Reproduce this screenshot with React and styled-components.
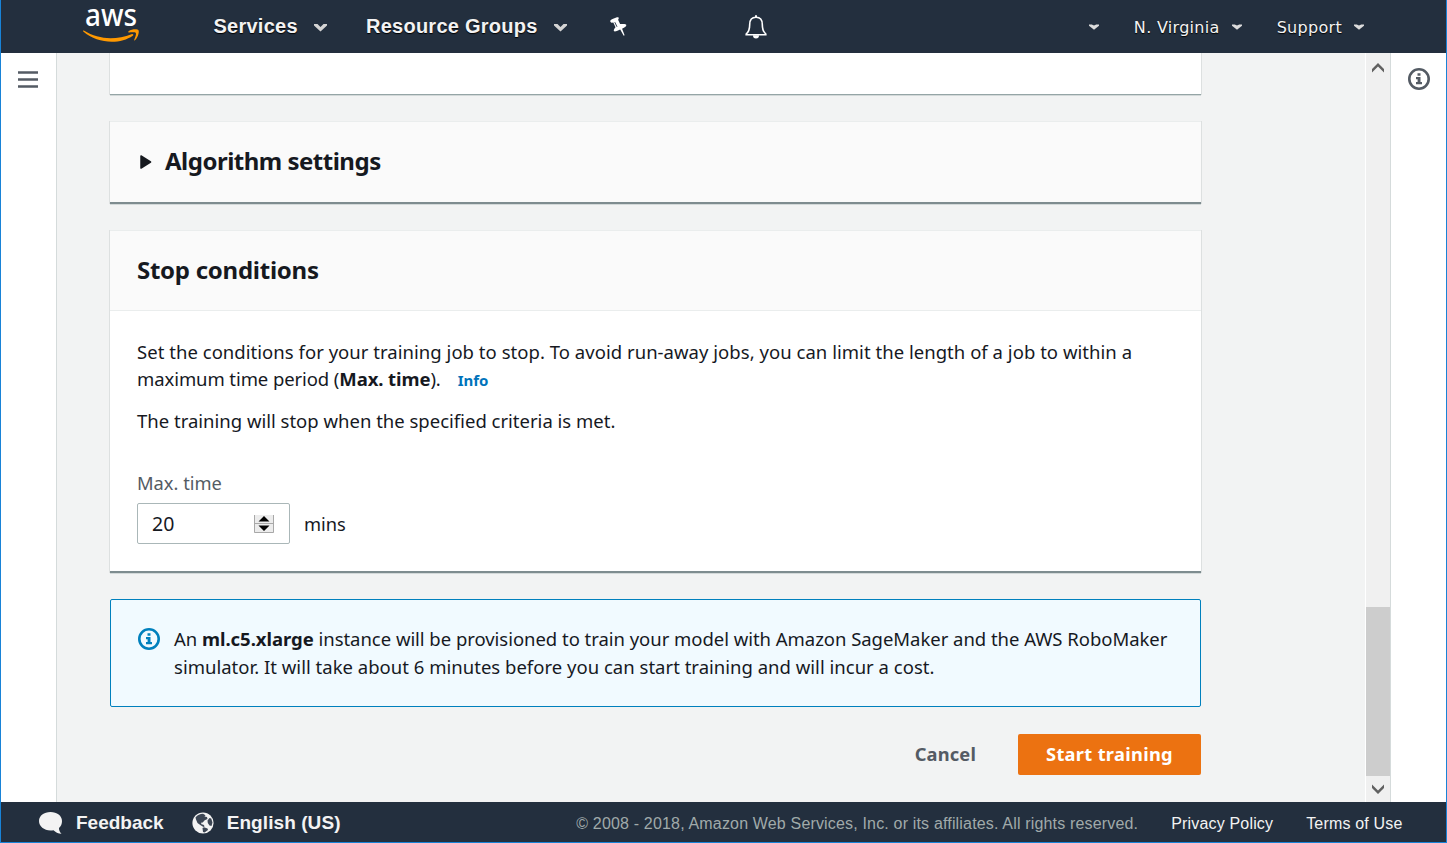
import React from "react";
import styled, { createGlobalStyle } from "styled-components";

const ember = `"Noto Sans", "Open Sans", sans-serif`;
const arial = `"Liberation Sans", Arial, sans-serif`;
const verdana = `"DejaVu Sans", Verdana, sans-serif`;

const GlobalStyle = createGlobalStyle`
  * { box-sizing: border-box; }
  html, body { margin: 0; padding: 0; overflow: hidden; }
  p, h2 { margin: 0; }
  svg { display: block; flex: none; }
  button { font: inherit; border: 0; background: none; padding: 0; }
`;

const Window = styled.div`
  display: flex;
  flex-direction: column;
  width: 1447px;
  height: 843px;
  border: 1px solid #1883d7;
  border-top: 0;
  background: #fff;
  overflow: hidden;
  color: #16191f;
  font-family: ${ember};
`;

const TopBar = styled.header`
  display: flex;
  align-items: center;
  flex: none;
  height: 53px;
  padding: 0 82px;
  background: #232f3e;
  color: #f3f3f3;
`;

const Logo = styled.svg`
  margin-right: 73.5px;
  overflow: visible;
`;

const MenuItem = styled.div`
  display: flex;
  align-items: center;
  gap: 16px;
  width: ${(p) => p.$width}px;
  padding-bottom: 2px;
  font: bold 20px/24px ${arial};
  letter-spacing: 0.25px;
  text-shadow: 0 1px 1px #000;
  svg { margin-top: 3px; }
`;

const PinSlot = styled.div`
  width: 135px;
`;

const AccountMenu = styled.div`
  display: flex;
  align-items: center;
  margin-left: auto;
`;

const AccountItem = styled.div`
  display: flex;
  align-items: center;
  gap: 12px;
  margin-left: ${(p) => p.$gap || 0}px;
  padding-top: 2px;
  font: 16px/20px ${verdana};
  letter-spacing: 0.3px;
  text-shadow: 0 1px 1px #000;
  svg { margin-bottom: 2px; }
`;

const Body = styled.div`
  display: flex;
  flex: 1;
  min-height: 0;
`;

const SideRail = styled.aside`
  display: flex;
  justify-content: center;
  flex: none;
  width: 56px;
  padding-top: ${(p) => p.$top}px;
  padding-right: ${(p) => (p.$right ? 0 : 1)}px;
  background: #fff;
  ${(p) => (p.$right ? "border-left" : "border-right")}: 1px solid #d5dbdb;
`;

const Content = styled.main`
  flex: 1;
  min-width: 0;
  padding: 0 164px 0 53px;
  background: #f2f3f3;
`;

const Panel = styled.section`
  height: ${(p) => p.$height}px;
  margin-bottom: ${(p) => p.$gap}px;
  background: ${(p) => (p.$muted ? "#fafafa" : "#fff")};
  border-top: ${(p) => (p.$cut ? "0" : "1px solid #eaeded")};
  border-bottom: ${(p) => (p.$cut ? "1px solid #95a5a6" : "2px solid #7e8c8f")};
  box-shadow: -1px 0 0 #dde0e0, 1px 0 0 #dde0e0, 0 1px 0 #d3d9d9;
`;

const PanelHeader = styled.div`
  display: flex;
  align-items: center;
  height: 80px;
  padding: 0 27px 0 ${(p) => p.$indent}px;
  background: #fafafa;
  border-bottom: ${(p) => (p.$line ? "1px solid #eaeded" : "0")};
`;

const Title = styled.h2`
  padding-bottom: 2px;
  font: 700 24px/30px ${ember};
  letter-spacing: ${(p) => p.$spacing}px;
`;

const Arrow = styled.svg`
  margin-right: 13px;
`;

const PanelBody = styled.div`
  padding: 28px 27px 0;
`;

const Line = styled.p`
  height: ${(p) => p.$height || 27}px;
  font-size: 18.5px;
  line-height: 25px;
  letter-spacing: ${(p) => p.$spacing || 0}px;
  white-space: nowrap;
`;

const InfoLink = styled.a`
  margin-left: 17px;
  color: #0073bb;
  font-size: 15px;
  font-weight: 700;
  letter-spacing: 0;
`;

const Label = styled.label`
  display: block;
  height: 33px;
  margin-top: 20px;
  color: #545b64;
  font-size: 18.3px;
  line-height: 25px;
`;

const Field = styled.div`
  display: flex;
  align-items: center;
  gap: 14px;
  font-size: 18.3px;
  line-height: 27px;
`;

const NumberBox = styled.div`
  display: flex;
  align-items: center;
  justify-content: space-between;
  width: 153px;
  height: 41px;
  padding: 0 15px 0 14px;
  border: 1px solid #aab7b8;
  border-radius: 2px;
  font-size: 19.5px;
`;

const Notice = styled.section`
  display: flex;
  height: 108px;
  margin-bottom: 27px;
  padding: 26px 27px;
  border: 1px solid #0080bd;
  border-radius: 2px;
  background: #f1faff;
  & > svg { margin: 2px 14px 0 0; }
`;

const Actions = styled.div`
  display: flex;
  justify-content: flex-end;
  font-size: 18.3px;
  font-weight: 700;
  line-height: 27px;
`;

const Cancel = styled.button`
  margin-right: 42px;
  padding-bottom: 2px;
  color: #545b64;
  letter-spacing: 0.15px;
`;

const Primary = styled.button`
  width: 183px;
  height: 41px;
  padding-bottom: 2px;
  border-radius: 2px;
  background: #ec7211;
  color: #fff;
  letter-spacing: 0.3px;
`;

const Scrollbar = styled.div`
  display: flex;
  flex-direction: column;
  align-items: center;
  justify-content: space-between;
  flex: none;
  width: 25px;
  padding: 10px 0 8px;
  background: #f0f0f0;
  border-left: 1px solid #fff;
`;

const Thumb = styled.div`
  width: 24px;
  height: 169px;
  margin: auto 0 8px;
  background: #cdcdcd;
`;

const BottomBar = styled.footer`
  display: flex;
  align-items: center;
  flex: none;
  height: 40px;
  padding: 1px 43.500px 0 37px;
  background: #232f3e;
  color: #f3f3f3;
`;

const FooterItem = styled.div`
  display: flex;
  align-items: center;
  gap: 13px;
  margin-right: 28px;
  font: bold 19px/22px ${arial};
  letter-spacing: ${(p) => p.$spacing || 0}px;
`;

const FooterText = styled.span`
  margin-left: ${(p) => p.$gap || "33px"};
  padding-top: 2px;
  color: ${(p) => (p.$muted ? "#a0aaaa" : "#f3f3f3")};
  font: 16px/20px ${arial};
  letter-spacing: 0.17px;
  white-space: nowrap;
`;

const Chevron = ({ small }) => (
  <svg width={small ? 10 : 13} height={small ? 6 : 9} viewBox={small ? "0 0 10 6" : "0 0 13 9"}>
    {small ? (
      <path d="M0 .5h2.800L5 1.500 7.200.5H10v1.300L5 5.800 0 1.800z" fill="#dcdcdc" />
    ) : (
      <path d="M0 1h3.500l3 3 3-3H13v1.500L6.500 8.500 0 2.500z" fill="#d4d4d4" />
    )}
  </svg>
);

const InfoIcon = ({ color }) => (
  <svg width="22" height="22" viewBox="0 0 22 22">
    <circle cx="11" cy="11" r="9.700" fill="none" stroke={color} strokeWidth="2.600" />
    <path d="M9.500 5.200h3v2.600h-3zM8 9h4.500v5H14v2.200H8V14h1.600v-2.800H8z" fill={color} />
  </svg>
);

const ScrollArrow = ({ down }) => (
  <svg width="12" height="10" viewBox="0 0 12 10">
    <path
      d={down ? "M0 .5l6 6 6-6v3.500L6 10 0 4z" : "M0 9.500l6-6 6 6V6L6 0 0 6z"}
      fill="#606060"
    />
  </svg>
);

export default function App() {
  return (
    <>
      <GlobalStyle />
      <Window>
        <TopBar>
          <Logo width="57" height="45" viewBox="0 0 57 45">
            <text x="2" y="22" fontFamily="Noto Sans" fontSize="30.500" fontWeight="500" fill="#fff" textLength="52" lengthAdjust="spacingAndGlyphs">aws</text>
            <path d="M.8 26.600C16 36 33 36 48.500 30.200c1.500-.6 2.600.6 1.300 1.600C37 40.800 14.500 40 .3 27.600c-.5-.6-.1-1.300.5-1z" fill="#ff9900" />
            <path d="M45.500 27.200c3.500-2.300 9-2.200 10-1 1 1.300-.4 7.500-3.600 10-.5.4-1 .2-.7-.4.9-2 2.300-6 1.600-6.900-.8-.9-4.700-.6-6.800-.4-.7.100-.9-.900-.5-1.300z" fill="#ff9900" />
          </Logo>
          <MenuItem $width={152.5}>Services <Chevron /></MenuItem>
          <MenuItem $width={244}>Resource Groups <Chevron /></MenuItem>
          <PinSlot>
            <svg width="17" height="20" viewBox="0 0 17 20">
              <path d="M.3 4.400C.1 3.300 1 2.500 2.500 1.900L6.300.4c1.300-.5 2.500-.3 2.500.5 0 .9-.8 1.500-.6 2l1.900 4c1.400 0 5-.2 5.900.6.800 1-.3 2.300-1.700 3.100l-2.200 1.100 2.500 6.600-.9.400-3.500-6.100-3.300 1.500c-1.600.6-2.800.7-3.100-.3-.3-1.100.9-2.700 1.700-3.600L3.300 5.600C2 5.900.6 5.600.3 4.400z" fill="#fff" />
              <path d="M4.800 5.200l2.200 4.600" stroke="#232f3e" strokeWidth=".9" />
            </svg>
          </PinSlot>
          <svg width="22" height="24" viewBox="0 0 22 24">
            <path d="M11 2.300c-4.300 0-6.300 3.200-6.300 7.200 0 5-1 7.500-3.500 9.500v.7h19.600V19c-2.500-2-3.500-4.500-3.500-9.500 0-4-2-7.200-6.300-7.200z" fill="none" stroke="#fff" strokeWidth="1.600" />
            <path d="M8 20.300h6a3 3.300 0 0 1-6 0zM10 .3h2V3h-2z" fill="#fff" />
          </svg>
          <AccountMenu>
            <AccountItem><Chevron small /></AccountItem>
            <AccountItem $gap={35}>N. Virginia <Chevron small /></AccountItem>
            <AccountItem $gap={35}>Support <Chevron small /></AccountItem>
          </AccountMenu>
        </TopBar>
        <Body>
          <SideRail $top={18}>
            <svg width="20" height="17" viewBox="0 0 20 17">
              <path d="M0 1.500h20M0 8.500h20M0 15.500h20" stroke="#545b64" strokeWidth="2.600" />
            </svg>
          </SideRail>
          <Content>
            <Panel $height={42} $gap={26} $cut />
            <Panel $height={83} $gap={26} $muted>
              <PanelHeader $indent={30}>
                <Arrow width="12" height="14" viewBox="0 0 12 14">
                  <path d="M1 1l9.500 6L1 13z" fill="#16191f" stroke="#16191f" strokeWidth="1.500" strokeLinejoin="round" />
                </Arrow>
                <Title $spacing={-0.5}>Algorithm settings</Title>
              </PanelHeader>
            </Panel>
            <Panel $height={343} $gap={26}>
              <PanelHeader $indent={27} $line>
                <Title $spacing={-0.26}>Stop conditions</Title>
              </PanelHeader>
              <PanelBody>
                <Line $spacing={0.035}>Set the conditions for your training job to stop. To avoid run-away jobs, you can limit the length of a job to within a</Line>
                <Line $height={42} $spacing={-0.09}>
                  maximum time period (<b>Max. time</b>).<InfoLink>Info</InfoLink>
                </Line>
                <Line $height={42}>The training will stop when the specified criteria is met.</Line>
                <Label>Max. time</Label>
                <Field>
                  <NumberBox>
                    20
                    <svg width="20" height="18" viewBox="0 0 20 18">
                      <path d="M0 0h20v18H0z" fill="#ececec" />
                      <path d="M.5 0v17.500h19V0M0 8.500h20" fill="none" stroke="#a8a8a8" />
                      <path d="M4.500 6.500L10 1l5.500 5.500zM4.500 10.500L10 16l5.500-5.500z" fill="#000" />
                    </svg>
                  </NumberBox>
                  <span>mins</span>
                </Field>
              </PanelBody>
            </Panel>
            <Notice>
              <InfoIcon color="#0080bd" />
              <div>
                <Line $height={28} $spacing={-0.035}>
                  An <b>ml.c5.xlarge</b> instance will be provisioned to train your model with Amazon SageMaker and the AWS RoboMaker
                </Line>
                <Line $spacing={0.015}>simulator. It will take about 6 minutes before you can start training and will incur a cost.</Line>
              </div>
            </Notice>
            <Actions>
              <Cancel>Cancel</Cancel>
              <Primary>Start training</Primary>
            </Actions>
          </Content>
          <Scrollbar>
            <ScrollArrow />
            <Thumb />
            <ScrollArrow down />
          </Scrollbar>
          <SideRail $top={15} $right>
            <InfoIcon color="#545b64" />
          </SideRail>
        </Body>
        <BottomBar>
          <FooterItem>
            <svg width="25" height="24" viewBox="0 0 25 24">
              <path d="M12.500 1C6 1 1 4.800 1 10s5 9.500 11.500 9.500c1 0 2-.1 3-.3 1.900 1.900 4.500 3.300 8 3.500-1.800-1.600-2.600-3.500-2.500-5.700 2-1.700 3-4.200 3-7 0-5.200-5-9-11.500-9z" fill="#f3f3f3" />
            </svg>
            Feedback
          </FooterItem>
          <FooterItem $spacing={0.08}>
            <svg width="22" height="22" viewBox="0 0 22 22">
              <circle cx="11" cy="11" r="10.600" fill="#f3f3f3" />
              <path d="M3.500 5.500C5.500 3 8 2 11 1.800l2.500 1.400-1 1.300 2.500.5.5 2-2.800 1.200-2 2.300-1.700.2.500 1.500 2 .5 1.200 1.500-1.200.8L9 13.500 5.500 11 4 7.500zM15.500 8.500l2-2.500 1.700.5 1.300 4-1 3.500-2-.5-1.700-2.500zM10.500 16l1.500-.7 3.500 1.200.5 1.500-3.500 2.500-1.500-.5z" fill="#3c4654" />
            </svg>
            English (US)
          </FooterItem>
          <FooterText $muted $gap="auto">
            © 2008 - 2018, Amazon Web Services, Inc. or its affiliates. All rights reserved.
          </FooterText>
          <FooterText>Privacy Policy</FooterText>
          <FooterText>Terms of Use</FooterText>
        </BottomBar>
      </Window>
    </>
  );
}
